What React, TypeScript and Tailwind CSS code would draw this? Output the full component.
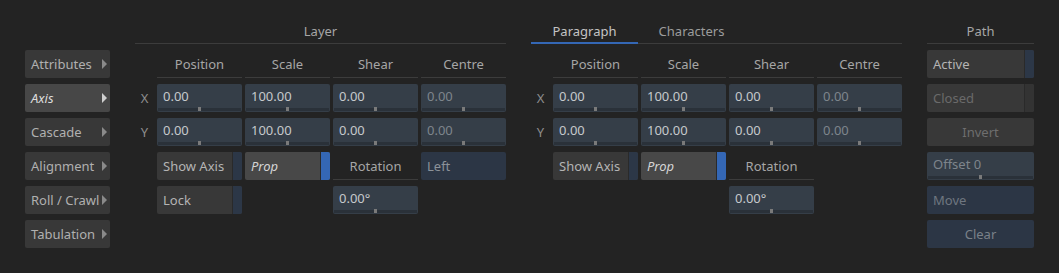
import React from 'react';

const font = { fontFamily: '"Noto Sans", "Open Sans", sans-serif' };

function Slider({ value, dim }: { value: string; dim?: boolean }) {
  return (
    <div className="flex h-[28px] flex-col rounded-[2px] bg-[#353e48]">
      <div className={`flex flex-1 items-center pl-[6px] ${dim ? 'text-[#7e858c]' : 'text-[#c6c9cc]'}`}>{value}</div>
      <div className="mx-[1px] mb-[1px] flex h-[3px] items-end justify-center bg-[#2a3139]">
        <div className="h-[4px] w-[3px] bg-[#7a7a7a]" />
      </div>
    </div>
  );
}

function Toggle({ label, italic, on, dimText, offColor }: { label: string; italic?: boolean; on?: boolean; dimText?: boolean; offColor?: string }) {
  return (
    <div className={`flex h-[28px] overflow-hidden rounded-[2px] ${on ? 'bg-[#484848]' : 'bg-[#383838]'}`}>
      <div className={`flex flex-1 items-center pl-[6px] ${italic ? 'italic' : ''} ${on ? 'text-[#d4d4d4]' : dimText ? 'text-[#6a6a6a]' : 'text-[#b4b4b4]'}`}>{label}</div>
      <div className="w-[1px] bg-[#2a2a2a]" />
      <div className={`w-[9px] ${on ? 'bg-[#3467b5]' : offColor ?? 'bg-[#2c3747]'}`} />
    </div>
  );
}

function ColHead({ label }: { label: string }) {
  return (
    <div className="flex h-[28px] items-center justify-center border-b border-[#3c3c3c] text-[#a6a6a6]">{label}</div>
  );
}

function Arrow({ light }: { light?: boolean }) {
  return (
    <svg width="5" height="10" viewBox="0 0 5 10">
      <path d="M0 0 L5 5 L0 10 Z" fill={light ? '#cfcfcf' : '#8a8a8a'} />
    </svg>
  );
}

function SideButton({ label, active }: { label: string; active?: boolean }) {
  return (
    <div className={`flex h-[28px] items-center justify-between rounded-[2px] pl-[6px] pr-[3px] ${active ? 'bg-[#474747] italic text-[#dcdcdc]' : 'bg-[#383838] text-[#b0b0b0]'}`}>
      <span className="whitespace-nowrap">{label}</span>
      <Arrow light={active} />
    </div>
  );
}

function TransformGrid({ layer }: { layer?: boolean }) {
  return (
    <div className="mt-[6px] grid grid-cols-[19px_repeat(4,85px)] gap-x-[3px] gap-y-[6px]">
      <div />
      <ColHead label="Position" />
      <ColHead label="Scale" />
      <ColHead label="Shear" />
      <ColHead label="Centre" />

      <div className="flex items-center justify-center text-[#8e8e8e]">X</div>
      <Slider value="0.00" />
      <Slider value="100.00" />
      <Slider value="0.00" />
      <Slider value="0.00" dim />

      <div className="flex items-center justify-center text-[#8e8e8e]">Y</div>
      <Slider value="0.00" />
      <Slider value="100.00" />
      <Slider value="0.00" />
      <Slider value="0.00" dim />

      <div />
      <Toggle label="Show Axis" />
      <Toggle label="Prop" italic on />
      <ColHead label="Rotation" />
      {layer ? (
        <div className="flex h-[28px] items-center rounded-[2px] bg-[#2c3645] pl-[6px] text-[#8c9299]">Left</div>
      ) : (
        <div />
      )}

      <div />
      {layer ? <Toggle label="Lock" /> : <div />}
      <div />
      <Slider value="0.00°" />
      <div />
    </div>
  );
}

export default function App() {
  return (
    <div className="flex h-[273px] w-[1059px] gap-[25px] bg-[#232323] pl-[25px] text-[13px] leading-[18px]" style={font}>
      <div className="flex w-[85px] flex-col gap-[6px] pt-[50px]">
        <SideButton label="Attributes" />
        <SideButton label="Axis" active />
        <SideButton label="Cascade" />
        <SideButton label="Alignment" />
        <SideButton label="Roll / Crawl" />
        <SideButton label="Tabulation" />
      </div>

      <div className="w-[371px]">
        <div className="flex h-[44px] items-end justify-center border-b border-[#3c3c3c] pb-[3px] text-[#a6a6a6]">Layer</div>
        <TransformGrid layer />
      </div>

      <div className="w-[371px]">
        <div className="flex h-[44px] items-end border-b border-[#3c3c3c]">
          <div className="relative flex h-full w-[107px] items-end justify-center pb-[3px] text-[#c4c4c4]">
            Paragraph
            <div className="absolute bottom-[-1px] left-0 right-0 h-[2px] bg-[#3467b5]" />
          </div>
          <div className="flex w-[107px] items-end justify-center pb-[3px] text-[#9c9c9c]">Characters</div>
        </div>
        <TransformGrid />
      </div>

      <div className="w-[107px]">
        <div className="flex h-[44px] items-end justify-center border-b border-[#3c3c3c] pb-[3px] text-[#a6a6a6]">Path</div>
        <div className="mt-[6px] flex flex-col gap-[6px]">
          <Toggle label="Active" />
          <Toggle label="Closed" dimText offColor="bg-[#333333]" />
          <div className="flex h-[28px] items-center justify-center rounded-[2px] bg-[#383838] text-[#6e6e6e]">Invert</div>
          <Slider value="Offset 0" dim />
          <div className="flex h-[28px] items-center rounded-[2px] bg-[#2c3645] pl-[6px] text-[#6f7680]">Move</div>
          <div className="flex h-[28px] items-center justify-center rounded-[2px] bg-[#2c3645] text-[#7a8189]">Clear</div>
        </div>
      </div>
    </div>
  );
}
